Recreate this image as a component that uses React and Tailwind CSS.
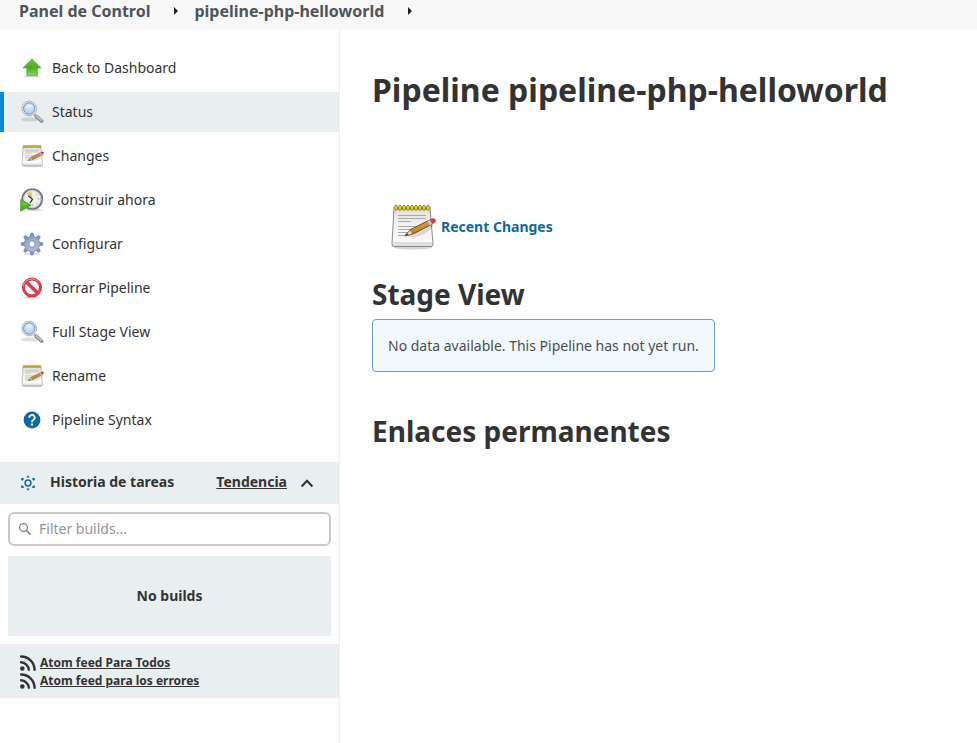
import React, { useState } from "react";

function ArrowUp() {
  return (
    <svg viewBox="0 0 24 24" className="size-6" aria-hidden="true">
      <defs>
        <linearGradient id="arrow" x1="0" y1="0" x2="0" y2="1">
          <stop offset="0" stopColor="#7ed13f" />
          <stop offset="0.5" stopColor="#4fae1c" />
          <stop offset="1" stopColor="#8fd35c" />
        </linearGradient>
      </defs>
      <ellipse cx="12" cy="20.200" rx="8.500" ry="1.400" fill="#000" opacity="0.14" />
      <path d="M12 2.800 L21 12 H17.600 V19.600 H6.800 V12 H3 Z" fill="url(#arrow)" stroke="#55a832" strokeWidth="0.7" strokeLinejoin="round" />
      <path d="M12 4.600 L17.500 10.800 H15.800 V14 Q11 13.500 8 16 V10.800 H6.300 Z" fill="#4fae22" opacity="0.5" />
    </svg>
  );
}

function Magnifier() {
  return (
    <svg viewBox="0 0 24 24" className="size-6" aria-hidden="true">
      <defs>
        <radialGradient id="lens" cx="0.5" cy="0.4" r="0.7">
          <stop offset="0" stopColor="#dcebfa" />
          <stop offset="1" stopColor="#a6c6ea" />
        </radialGradient>
      </defs>
      <ellipse cx="10" cy="19.500" rx="9" ry="2" fill="#000" opacity="0.12" />
      <path d="M14 14 L16.500 16.500" stroke="#b0b3b2" strokeWidth="2.200" />
      <path d="M16.400 16.400 L21.600 21" stroke="#858785" strokeWidth="3.600" strokeLinecap="round" />
      <path d="M16.400 16 L21.400 20.400" stroke="#c3c5c3" strokeWidth="1.700" strokeLinecap="round" />
      <circle cx="9.200" cy="8.500" r="7.400" fill="#e9eaea" stroke="#adb0b0" strokeWidth="0.9" />
      <circle cx="9.200" cy="8.500" r="5.700" fill="url(#lens)" stroke="#6e95cb" strokeWidth="1" />
      <path d="M5.200 8.200 Q6.200 4.200 10.200 4.300 Q13 4.700 13.200 7.200 Q8.200 6.500 5.200 8.200Z" fill="#fff" opacity="0.45" />
    </svg>
  );
}

const RINGS = [6, 10, 14, 18, 22, 26, 30, 34, 38];

function Notepad({ className }) {
  return (
    <svg viewBox="-2 0 48 48" className={className} aria-hidden="true">
      <defs>
        <linearGradient id="paper" x1="0" y1="0" x2="0" y2="1">
          <stop offset="0" stopColor="#dededc" />
          <stop offset="0.5" stopColor="#f4f4f4" />
          <stop offset="0.9" stopColor="#fbfbfb" />
          <stop offset="1" stopColor="#cfcfcd" />
        </linearGradient>
        <linearGradient id="pencil" x1="0" y1="0" x2="0.5" y2="1">
          <stop offset="0" stopColor="#e9b45c" />
          <stop offset="1" stopColor="#b9741b" />
        </linearGradient>
      </defs>
      <ellipse cx="23" cy="44.500" rx="19" ry="2" fill="#000" opacity="0.16" />
      <path d="M4 4.500 H40 L43 41 Q43 43.500 41 43.500 H4 Q1.800 43.500 2 41 Z" fill="url(#paper)" stroke="#8a8c89" strokeWidth="1" />
      <path d="M2.600 40 H42.400" stroke="#c4c6c3" strokeWidth="1" />
      <path d="M8 12.500H36M8 15.500H36M8 18.500H21M8 23.500H34M8 26.500H30M8 29.500H26M8 32.500H16" stroke="#a9aba8" strokeWidth="1" />
      <path d="M5 4.500 H39 V6.500 H5Z" fill="#6f6716" />
      {RINGS.map((x) => (
        <ellipse key={x} cx={x} cy="4.800" rx="1.400" ry="2.700" fill="#f4e04a" stroke="#8d7d0d" strokeWidth="0.9" />
      ))}
      <path d="M17 33.500 Q28 36 39 28 L44 22 L38 22Z" fill="#000" opacity="0.12" />
      <path d="M15 32.800 L20 26.800 L39.500 17 L42 21.200 L23 31 Z" fill="url(#pencil)" stroke="#694309" strokeWidth="0.9" strokeLinejoin="round" />
      <path d="M15 32.800 L20 26.800 L23 31Z" fill="#ecd4a8" stroke="#8b6528" strokeWidth="0.7" />
      <path d="M15 32.800 L17 30.300 L18.500 32Z" fill="#333" />
      <path d="M37 18.200 L40.500 16.400 L43 20.700 L39.600 22.500Z" fill="#c8cac8" stroke="#8a8c8a" strokeWidth="0.6" />
      <path d="M40 16.600 L42.800 15.500 Q45.800 15.500 45.600 18.600 L42.500 20.800Z" fill="#ef3535" stroke="#b8403b" strokeWidth="0.7" />
    </svg>
  );
}

function ClockPlay() {
  return (
    <svg viewBox="0 0 24 24" className="size-6" aria-hidden="true">
      <ellipse cx="14" cy="21.800" rx="8" ry="1.500" fill="#000" opacity="0.15" />
      <circle cx="12.300" cy="11" r="9.900" fill="#eeeeeb" stroke="#77758d" strokeWidth="1.900" />
      <circle cx="12.300" cy="11" r="8.700" fill="none" stroke="#c2c0d2" strokeWidth="1" />
      <path d="M6.500 5.300 L11.300 3.800 L12.200 10.500Z" fill="#e3c558" />
      <path d="M8.300 7.800 L12.500 11.300 L10 14.800" fill="none" stroke="#333" strokeWidth="1.200" />
      <g fill="#99998f">
        <circle cx="18.500" cy="11" r="0.700" />
        <circle cx="16.800" cy="6.800" r="0.500" />
        <circle cx="16.800" cy="15.100" r="0.500" />
        <circle cx="12.500" cy="17" r="0.700" />
      </g>
      <path d="M0.700 11.500 L11.200 17.200 L0.700 23.300Z" fill="#4db51a" stroke="#4a9a2a" strokeWidth="0.800" strokeLinejoin="round" />
      <path d="M1.400 13 L8.500 17 L1.400 17.500Z" fill="#86d94e" opacity="0.5" />
    </svg>
  );
}

const TEETH = ["rotate(0 12 12)", "rotate(45 12 12)", "rotate(90 12 12)", "rotate(135 12 12)", "rotate(180 12 12)", "rotate(225 12 12)", "rotate(270 12 12)", "rotate(315 12 12)"];

function Gear() {
  return (
    <svg viewBox="0 0 24 24" className="size-6" aria-hidden="true">
      <defs>
        <linearGradient id="gear" gradientUnits="userSpaceOnUse" x1="6" y1="1" x2="14" y2="22">
          <stop offset="0" stopColor="#6f8ab8" />
          <stop offset="0.5" stopColor="#9fadd0" />
          <stop offset="1" stopColor="#b6b9dc" />
        </linearGradient>
      </defs>
      <ellipse cx="12" cy="22" rx="8" ry="1.500" fill="#000" opacity="0.13" />
      <g fill="#8391b8">
        {TEETH.map((t) => (
          <path key={t} d="M9.200 5.500 Q10.200 4 10.300 1.500 Q12 -0.400 13.700 1.500 Q13.800 4 14.800 5.500Z" transform={t} />
        ))}
      </g>
      <circle cx="12" cy="12" r="8" fill="#8391b8" />
      <circle cx="12" cy="12" r="7.500" fill="url(#gear)" />
      <circle cx="12" cy="12" r="4.700" fill="none" stroke="#a9b4d6" strokeWidth="1" />
      <circle cx="12" cy="12" r="3.200" fill="#fff" stroke="#7c8ab2" strokeWidth="0.9" />
    </svg>
  );
}

function Forbidden() {
  return (
    <svg viewBox="0 0 24 24" className="size-6" aria-hidden="true">
      <ellipse cx="12" cy="21.200" rx="8" ry="1.400" fill="#000" opacity="0.16" />
      <circle cx="12" cy="11.500" r="8.500" fill="#f6f6f6" stroke="#c92a30" strokeWidth="3" />
      <path d="M6 5.500 L18 17.500" stroke="#c92a30" strokeWidth="3.400" />
      <circle cx="12" cy="11.500" r="8.500" fill="none" stroke="#e04348" strokeWidth="1.800" />
      <path d="M6 5.500 L18 17.500" stroke="#e04348" strokeWidth="2.200" />
      <path d="M3.400 10 A8.800 8.800 0 0 1 18.200 5.300" fill="none" stroke="#f2a3a5" strokeWidth="0.900" />
    </svg>
  );
}

function Help() {
  return (
    <svg viewBox="0 0 24 24" className="size-6" aria-hidden="true">
      <circle cx="12" cy="12" r="8.400" fill="#0b6aa2" />
      <path d="M9.300 9.700 A2.700 2.600 0 1 1 13.400 11.800 Q12 12.600 12 14.200" fill="none" stroke="#fff" strokeWidth="1.800" />
      <path d="M11 15.500H13V17.400H11Z" fill="#fff" />
    </svg>
  );
}

function BuildSun() {
  return (
    <svg viewBox="0 0 16 16" className="size-4" aria-hidden="true">
      <circle cx="8" cy="8" r="2.900" fill="none" stroke="#0b6aa2" strokeWidth="1.500" />
      <g fill="#0b6aa2">
        <path d="M6.300 2.500 L8 0.300 L9.700 2.500Z" />
        <path d="M6.300 13.500 L8 15.700 L9.700 13.500Z" />
        <path d="M1.300 2.900 L4.300 3.300 L2.600 5.700 L1 5.100Z" />
        <path d="M14.700 2.900 L11.700 3.300 L13.400 5.700 L15 5.100Z" />
        <path d="M1.300 13.100 L4.300 12.700 L2.600 10.300 L1 10.900Z" />
        <path d="M14.700 13.100 L11.700 12.700 L13.400 10.300 L15 10.900Z" />
      </g>
    </svg>
  );
}

function Feed() {
  return (
    <svg viewBox="0 0 16 16" className="size-4 shrink-0" aria-hidden="true">
      <circle cx="2.300" cy="13.500" r="2.300" fill="#333" />
      <path d="M1 7.300 A8 8 0 0 1 8.800 14.800M1 1.500 A13.500 13.500 0 0 1 14.600 14.800" fill="none" stroke="#333" strokeWidth="2.400" strokeLinecap="round" />
    </svg>
  );
}

function Caret() {
  return (
    <svg viewBox="0 0 4 8" className="h-2 w-1" aria-hidden="true">
      <path d="M0 0 L4 4 L0 8Z" fill="#222" />
    </svg>
  );
}

const TASKS = [
  { label: "Back to Dashboard", icon: <ArrowUp /> },
  { label: "Status", icon: <Magnifier />, active: true },
  { label: "Changes", icon: <Notepad className="size-6" /> },
  { label: "Construir ahora", icon: <ClockPlay /> },
  { label: "Configurar", icon: <Gear /> },
  { label: "Borrar Pipeline", icon: <Forbidden /> },
  { label: "Full Stage View", icon: <Magnifier /> },
  { label: "Rename", icon: <Notepad className="size-6" /> },
  { label: "Pipeline Syntax", icon: <Help /> },
];

function SidePanel() {
  const [open, setOpen] = useState(true);
  return (
    <aside className="w-[340px] shrink-0 border-r border-[#eaeff2]">
      <nav className="flex flex-col gap-1 pt-[18px] pb-[22px]">
        {TASKS.map((task) => (
          <a
            key={task.label}
            href="#"
            aria-current={task.active ? "page" : undefined}
            className={
              task.active
                ? "flex h-10 items-center gap-2 border-l-4 border-[#0b88d8] bg-[#e9eef1] pl-4"
                : "flex h-10 items-center gap-2 pl-5"
            }
          >
            {task.icon}
            <span>{task.label}</span>
          </a>
        ))}
      </nav>
      <section>
        <div className="flex h-[42px] items-center bg-[#e9eef1] pr-6 pl-5 font-bold">
          <BuildSun />
          <div className="ml-[14px] flex grow justify-between pb-0.5">
            <h2>Historia de tareas</h2>
            <a href="#" className="underline">Tendencia</a>
          </div>
          <button type="button" aria-label="Historia de tareas" aria-expanded={open} onClick={() => setOpen(!open)} className="ml-3">
            <svg viewBox="0 0 16 16" className="size-4" aria-hidden="true">
              <path d="M2.600 11.500 L8 5.700 L13.400 11.500" fill="none" stroke="#333" strokeWidth="2" />
            </svg>
          </button>
        </div>
        {open && (
          <div className="p-2">
            <label className="flex h-[34px] items-center gap-[7px] rounded-md border-2 border-[#c8c8c8] px-2">
              <svg viewBox="0 0 14 14" className="size-[14px] shrink-0" aria-hidden="true">
                <circle cx="5.500" cy="5.500" r="3.900" fill="none" stroke="#808080" strokeWidth="1.300" />
                <path d="M8.400 8.400 L12.600 12.600" stroke="#808080" strokeWidth="1.500" />
              </svg>
              <input
                type="text"
                aria-label="Filter builds"
                placeholder="Filter builds..."
                className="min-w-0 grow bg-transparent outline-none placeholder:text-[#959595]"
              />
            </label>
            <div className="mt-[10px] flex h-20 items-center justify-center bg-[#e9eef1] font-bold">No builds</div>
          </div>
        )}
        <div className="bg-[#e9eef1] px-5 pt-[10px] pb-2 text-xs leading-[18px] font-bold">
          <a href="#" className="flex items-center gap-1"><Feed /><span className="underline">Atom feed Para Todos</span></a>
          <a href="#" className="flex items-center gap-1"><Feed /><span className="underline">Atom feed para los errores</span></a>
        </div>
      </section>
    </aside>
  );
}

export default function App() {
  return (
    <div className="flex min-h-screen flex-col bg-white font-['Noto_Sans',sans-serif] text-sm text-[#333]">
      <header className="flex h-[30px] items-center bg-[#f8f8f8] pb-2 pl-[19px] text-base leading-[22px] font-bold text-[#4d545d]">
        <a href="#">Panel de Control</a>
        <span className="mr-4 ml-6"><Caret /></span>
        <a href="#">pipeline-php-helloworld</a>
        <span className="ml-6"><Caret /></span>
      </header>
      <div className="flex grow">
        <SidePanel />
        <main className="min-w-0 grow px-8 pt-9">
          <h1 className="text-[32px] leading-[48px] font-bold">Pipeline pipeline-php-helloworld</h1>
          <a href="#" className="mt-[89px] ml-4 flex w-fit items-center gap-[5px] font-bold text-[#0b6aa2]">
            <Notepad className="size-12" />
            <span>Recent Changes</span>
          </a>
          <h2 className="mt-[22px] text-[28px] leading-[42px] font-bold">Stage View</h2>
          <p className="mt-1 w-fit rounded border border-[#6a9bd1] bg-[#f1f9ff] px-[15px] py-4 leading-[19px] text-[#4d4d4d]">
            No data available. This Pipeline has not yet run.
          </p>
          <h2 className="mt-[38px] text-[28px] leading-[42px] font-bold">Enlaces permanentes</h2>
        </main>
      </div>
    </div>
  );
}
